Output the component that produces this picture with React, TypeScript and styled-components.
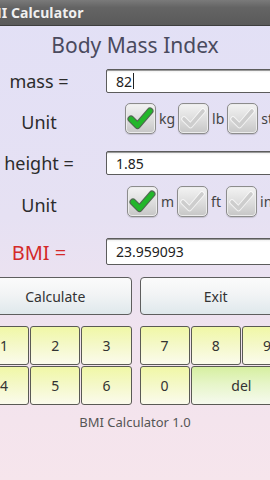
import React from "react";
import styled, { createGlobalStyle } from "styled-components";

const GlobalStyle = createGlobalStyle`
  html, body { margin: 0; padding: 0; overflow: hidden; }
  body { font-family: "Noto Sans", "Open Sans", sans-serif; }
`;

const Screen = styled.div`
  width: 270px;
  height: 480px;
  overflow: hidden;
  background: linear-gradient(180deg, #e2e0f6 0%, #e6e1f3 45%, #f2e3ee 75%, #f6e5ec 100%);
`;

const Frame = styled.div`
  width: 320px;
  margin-left: -25px;
  display: flex;
  flex-direction: column;
`;

const TitleBar = styled.div`
  height: 25px;
  display: flex;
  align-items: center;
  padding-left: 4px;
  background: linear-gradient(180deg, #7a7a7a 0%, #646464 30%, #5a5a5a 100%);
  border-bottom: 1px solid #3e3e3e;
  color: #f0f0f0;
  font-weight: 700;
  font-size: 14px;
  letter-spacing: 0.1px;
`;

const Heading = styled.div`
  margin-top: 6px;
  line-height: 26px;
  font-size: 21px;
  color: #4a4a5e;
  text-align: center;
`;

const Form = styled.div`
  display: flex;
  flex-direction: column;
  padding: 0 3px 0 0;
`;

const Row = styled.div<{ $h: number; $mt: number }>`
  display: grid;
  grid-template-columns: 128px 1fr;
  column-gap: 3px;
  align-items: center;
  height: ${(p) => p.$h}px;
  margin-top: ${(p) => p.$mt}px;
`;

const Label = styled.div<{ $red?: boolean; $dy?: number }>`
  text-align: center;
  font-size: ${(p) => (p.$red ? 20 : 18)}px;
  color: ${(p) => (p.$red ? "#d42a2a" : "#2c2c2c")};
  position: relative;
  top: ${(p) => p.$dy ?? 0}px;
`;

const Input = styled.div`
  height: 100%;
  box-sizing: border-box;
  border: 1px solid #5c5c5c;
  border-radius: 2px;
  background: linear-gradient(180deg, #e8e8e8 0px, #ffffff 3px, #ffffff 100%);
  box-shadow: inset 0 1px 0 #9a9a9a;
  display: flex;
  align-items: center;
  padding-left: 9px;
  font-size: 14px;
  color: #222;
`;

const Caret = styled.span`
  display: inline-block;
  width: 1px;
  height: 16px;
  background: #222;
  margin-left: 1px;
`;

const Checks = styled.div<{ $pl: number }>`
  display: flex;
  align-items: center;
  height: 100%;
  padding-left: ${(p) => p.$pl}px;
`;

const Box = styled.div`
  width: 31px;
  height: 31px;
  box-sizing: border-box;
  border: 1px solid #8c8c8c;
  border-radius: 5px;
  background: linear-gradient(180deg, #f3f3f3 0%, #dcdcdc 55%, #c6c6c6 100%);
  box-shadow: inset 0 0 0 1px #ececec, 0 1px 1px rgba(0,0,0,0.15);
  display: flex;
  align-items: center;
  justify-content: center;
`;

const UnitText = styled.span`
  font-size: 14px;
  color: #444;
  margin: 0 3px 0 3px;
  min-width: 12px;
`;

const Check = ({ on }: { on: boolean }) => (
  <Box>
    <svg width="27" height="27" viewBox="0 0 27 27">
      <path
        d="M4 14 L10.5 20.5 L23 6"
        fill="none"
        stroke={on ? "#2e4a2e" : "#ffffff"}
        strokeWidth={on ? 7 : 5.5}
        strokeLinecap="round"
        strokeLinejoin="round"
        opacity={on ? 0.8 : 0.7}
      />
      <path
        d="M4 14 L10.5 20.5 L23 6"
        fill="none"
        stroke={on ? "#22b62a" : "#cdcdcd"}
        strokeWidth={on ? 4.8 : 3.6}
        strokeLinecap="round"
        strokeLinejoin="round"
      />
    </svg>
  </Box>
);

const Halves = styled.div<{ $mt: number }>`
  display: grid;
  grid-template-columns: 1fr 1fr;
  column-gap: 8px;
  padding: 0 3px 0 4px;
  margin-top: ${(p) => p.$mt}px;
`;

const Button = styled.div`
  height: 38px;
  box-sizing: border-box;
  border: 1.5px solid #5e5e5e;
  border-radius: 4px;
  background: linear-gradient(180deg, #fbfbfb 0%, #f2f4f5 45%, #dfe8ec 100%);
  display: flex;
  align-items: center;
  justify-content: center;
  font-size: 14px;
  color: #333;
`;

const Pad = styled.div`
  display: grid;
  grid-template-columns: repeat(3, 1fr);
  grid-auto-rows: 39px;
  gap: 1px;
`;

const Key = styled.div<{ $wide?: boolean }>`
  grid-column: ${(p) => (p.$wide ? "span 2" : "auto")};
  box-sizing: border-box;
  border: 1.5px solid #5a5a55;
  border-radius: 3px;
  background: ${(p) =>
    p.$wide
      ? "linear-gradient(180deg, #d6efa0 0%, #e6f5c8 45%, #f6faee 100%)"
      : "linear-gradient(180deg, #f0f7a6 0%, #f4f8c6 45%, #fbfbec 100%)"};
  display: flex;
  align-items: center;
  justify-content: center;
  font-size: 14px;
  color: #333;
`;

const Footer = styled.div`
  margin-top: 8px;
  line-height: 18px;
  text-align: center;
  font-size: 13px;
  color: #555;
`;

export default function App() {
  return (
    <Screen>
      <GlobalStyle />
      <Frame>
        <TitleBar>BMI Calculator</TitleBar>
        <Heading>Body Mass Index</Heading>
        <Form>
          <Row $h={24} $mt={11}>
            <Label>mass =</Label>
            <Input>
              82<Caret />
            </Input>
          </Row>
          <Row $h={31} $mt={10}>
            <Label $dy={3}>Unit</Label>
            <Checks $pl={19}>
              <Check on />
              <UnitText>kg</UnitText>
              <Check on={false} />
              <UnitText>lb</UnitText>
              <Check on={false} />
              <UnitText>st</UnitText>
            </Checks>
          </Row>
          <Row $h={24} $mt={17}>
            <Label>height =</Label>
            <Input>1.85</Input>
          </Row>
          <Row $h={31} $mt={11}>
            <Label $dy={3}>Unit</Label>
            <Checks $pl={21}>
              <Check on />
              <UnitText>m</UnitText>
              <Check on={false} />
              <UnitText>ft</UnitText>
              <Check on={false} />
              <UnitText>in</UnitText>
            </Checks>
          </Row>
          <Row $h={25} $mt={21}>
            <Label $red $dy={1}>BMI =</Label>
            <Input>23.959093</Input>
          </Row>
        </Form>
        <Halves $mt={14}>
          <Button>Calculate</Button>
          <Button>Exit</Button>
        </Halves>
        <Halves $mt={11}>
          <Pad>
            <Key>1</Key>
            <Key>2</Key>
            <Key>3</Key>
            <Key>4</Key>
            <Key>5</Key>
            <Key>6</Key>
          </Pad>
          <Pad>
            <Key>7</Key>
            <Key>8</Key>
            <Key>9</Key>
            <Key>0</Key>
            <Key $wide>del</Key>
          </Pad>
        </Halves>
        <Footer>BMI Calculator 1.0</Footer>
      </Frame>
    </Screen>
  );
}
